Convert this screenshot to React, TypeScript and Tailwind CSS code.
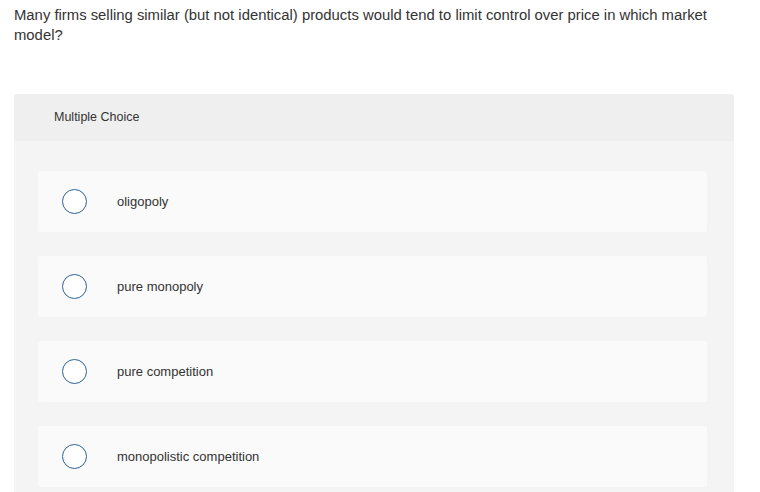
import React from "react";

const options = ["oligopoly", "pure monopoly", "pure competition", "monopolistic competition"];

const App = () => {
    return (
        <div className="w-[760px] h-[492px] overflow-hidden bg-white font-['Liberation_Sans',sans-serif] text-[#333]">
            <p className="pl-[14px] pt-[5px] w-[724px] text-[14.85px] leading-[20px]">
                Many firms selling similar (but not identical) products would tend to limit control over price in which market model?
            </p>
            <div className="ml-[14px] mt-[49px] w-[720px] rounded-t-[3px] bg-[#f4f4f4] pb-10">
                <div className="h-[47px] flex items-center pl-[40px] bg-[#efefef] rounded-t-[3px] text-[12.5px]">
                    Multiple Choice
                </div>
                <div className="flex flex-col gap-[24px] pt-[30px] pl-[24px] pr-[27px]">
                    {options.map((o) => (
                        <div key={o} className="h-[61px] bg-[#fafafa] rounded-[3px] flex items-center pl-[24px]">
                            <span className="w-[25px] h-[25px] rounded-full border-[1.5px] border-[#2f6196] bg-white shrink-0" />
                            <span className="ml-[30px] text-[13px]">{o}</span>
                        </div>
                    ))}
                </div>
            </div>
        </div>
    );
};

export default App;
